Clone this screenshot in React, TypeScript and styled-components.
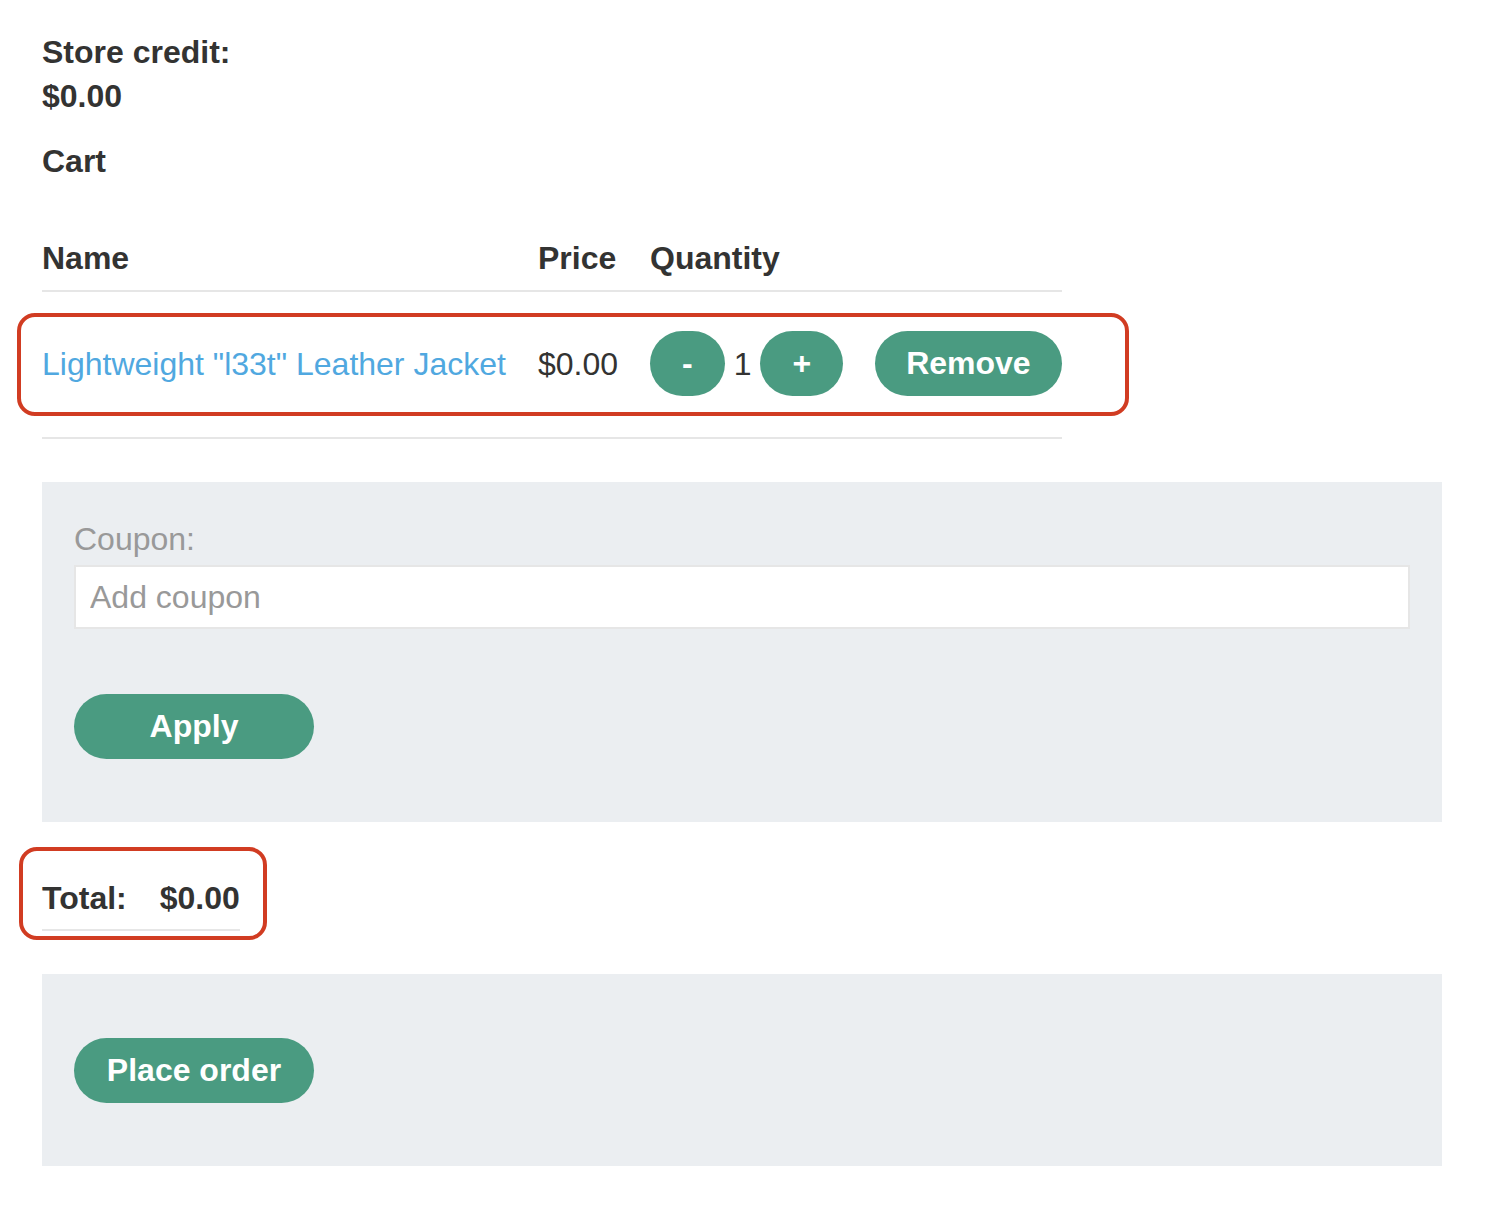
import React from "react";
import styled, { createGlobalStyle } from "styled-components";

const GlobalStyle = createGlobalStyle`
  body {
    margin: 0;
    background: #fff;
    font-family: "Liberation Sans", Arial, sans-serif;
    color: #333332;
  }
`;

const Page = styled.div`
  padding: 30px 66px 40px 42px;
  width: 1400px;
`;

const Heading = styled.div`
  font-size: 32px;
  line-height: 44px;
  font-weight: 700;
`;

const CartTitle = styled(Heading)`
  margin-top: 21px;
`;

const Table = styled.div`
  width: 1020px;
  margin-top: 53px;
`;

const Row = styled.div<{ $head?: boolean }>`
  position: relative;
  display: grid;
  grid-template-columns: 496px 112px 1fr;
  align-items: center;
  font-size: 32px;
  line-height: 44px;
  font-weight: ${(p) => (p.$head ? 700 : 400)};
  padding: ${(p) => (p.$head ? "0 0 10px" : "39px 0 41px")};
  border-bottom: 2px solid #e6e6e6;
`;

const Highlight = styled.div<{ $top: number; $right: number; $bottom: number; $left: number }>`
  position: absolute;
  top: ${(p) => p.$top}px;
  right: ${(p) => p.$right}px;
  bottom: ${(p) => p.$bottom}px;
  left: ${(p) => p.$left}px;
  border: 4px solid #d13c22;
  border-radius: 18px;
  pointer-events: none;
`;

const ProductLink = styled.a`
  color: #50a8e0;
  text-decoration: none;
`;

const Quantity = styled.div`
  display: flex;
  align-items: center;
`;

const Count = styled.span`
  margin: 0 9px;
`;

const Button = styled.button<{ $wide?: boolean }>`
  height: 65px;
  min-width: ${(p) => (p.$wide ? "240px" : "0")};
  padding: 0 32px;
  border: none;
  border-radius: 33px;
  background: #4a9b81;
  color: #fff;
  font-family: "Liberation Sans", Arial, sans-serif;
  font-size: 32px;
  font-weight: 700;
  line-height: 65px;
  cursor: pointer;
`;

const RemoveButton = styled(Button)`
  margin-left: 32px;
  padding: 0 31px;
`;

const Panel = styled.div<{ $top: number; $pad: string }>`
  margin-top: ${(p) => p.$top}px;
  background: #ebeef1;
  padding: ${(p) => p.$pad};
  display: flex;
  flex-direction: column;
  align-items: flex-start;
`;

const Label = styled.label`
  font-size: 32px;
  line-height: 44px;
  color: #999;
`;

const CouponInput = styled.input`
  box-sizing: border-box;
  width: 100%;
  height: 64px;
  margin: 4px 0 65px;
  padding: 0 14px;
  border: 2px solid #e6e6e6;
  background: #fff;
  font-family: "Liberation Sans", Arial, sans-serif;
  font-size: 32px;
  color: #333332;
  outline: none;
  &::placeholder {
    color: #999;
  }
`;

const TotalWrap = styled.div`
  position: relative;
  display: inline-flex;
  margin-top: 54px;
  padding-bottom: 9px;
  border-bottom: 2px solid #e6e6e6;
  font-size: 32px;
  line-height: 44px;
  font-weight: 700;
`;

const TotalValue = styled.span`
  margin-left: 33px;
`;

export default function App() {
  return (
    <Page>
      <GlobalStyle />
      <Heading>Store credit:</Heading>
      <Heading>$0.00</Heading>
      <CartTitle>Cart</CartTitle>
      <Table>
        <Row $head>
          <span>Name</span>
          <span>Price</span>
          <span>Quantity</span>
        </Row>
        <Row>
          <ProductLink href="#">Lightweight "l33t" Leather Jacket</ProductLink>
          <span>$0.00</span>
          <Quantity>
            <Button>-</Button>
            <Count>1</Count>
            <Button>+</Button>
            <RemoveButton>Remove</RemoveButton>
          </Quantity>
          <Highlight $top={21} $right={-67} $bottom={21} $left={-25} />
        </Row>
      </Table>
      <Panel $top={43} $pad="35px 32px 63px">
        <Label>Coupon:</Label>
        <CouponInput placeholder="Add coupon" />
        <Button $wide>Apply</Button>
      </Panel>
      <TotalWrap>
        <span>Total:</span>
        <TotalValue>$0.00</TotalValue>
        <Highlight $top={-29} $right={-27} $bottom={-11} $left={-23} />
      </TotalWrap>
      <Panel $top={43} $pad="64px 32px 63px">
        <Button $wide>Place order</Button>
      </Panel>
    </Page>
  );
}
